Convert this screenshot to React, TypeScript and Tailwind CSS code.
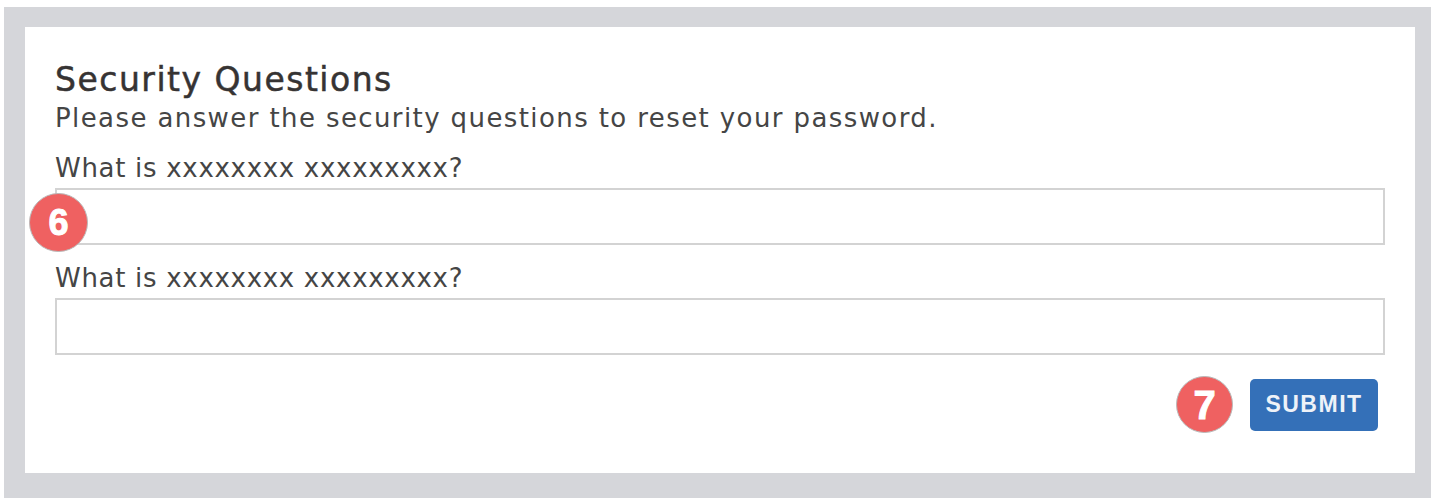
export default function App() {
  const questions = ['What is xxxxxxxx xxxxxxxxx?', 'What is xxxxxxxx xxxxxxxxx?']

  return (
    <div className="w-[1431px] h-[498px] bg-white pl-[4px] pt-[7px]" style={{ fontFamily: '"DejaVu Sans", sans-serif' }}>
      <div className="h-full bg-[#d5d6da] pl-[21px] pr-[16px] pt-[20px] pb-[25px]">
        <div className="h-full bg-white pl-[30px] pr-[30px] pt-[33px] flex flex-col text-[#3b3b3b]">
          <h1 className="text-[33px] leading-[40px] tracking-[1.5px] text-[#363333] [-webkit-text-stroke:0.5px_#363333]">
            Security Questions
          </h1>
          <p className="mt-[2px] text-[26px] leading-[32px] tracking-[1.4px] text-[#454545]">
            Please answer the security questions to reset your password.
          </p>

          {questions.map((q, idx) => (
            <div key={idx} className={`flex flex-col ${idx === 0 ? 'mt-[19px]' : 'mt-[18px]'}`}>
              <label className="text-[26px] leading-[30px] tracking-[0.7px] text-[#454545]">{q}</label>
              <div className="relative mt-[5px]">
                <input
                  type="text"
                  className="w-full h-[57px] border-2 border-[#d3d3d3] bg-white focus:outline-none"
                />
                {idx === 0 && (
                  <div className="absolute left-[-26px] top-[5px] w-[59px] h-[59px] rounded-full bg-[#ef6161] border border-[#b9b9b9] flex items-center justify-center text-white text-[36px] font-bold [-webkit-text-stroke:1px_white]" style={{ fontFamily: '"Liberation Sans", sans-serif' }}>
                    6
                  </div>
                )}
              </div>
            </div>
          ))}

          <div className="flex justify-end items-center gap-[17px] mt-[21px] mr-[7px]">
            <div className="w-[57px] h-[57px] rounded-full bg-[#ef6161] border border-[#b9b9b9] flex items-center justify-center text-white text-[40px] font-bold [-webkit-text-stroke:1px_white]" style={{ fontFamily: '"Liberation Sans", sans-serif' }}>
              7
            </div>
            <button className="w-[128px] h-[52px] rounded-[5px] bg-[#3470b8] text-[#eef2f8] text-[23px] font-bold tracking-[1.5px]" style={{ fontFamily: '"Liberation Sans", sans-serif' }}>
              SUBMIT
            </button>
          </div>
        </div>
      </div>
    </div>
  )
}
